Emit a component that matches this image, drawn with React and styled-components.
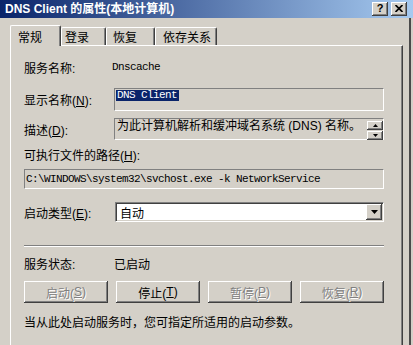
import React from 'react';
import styled, { createGlobalStyle } from 'styled-components';

const GlobalStyle = createGlobalStyle`
  html, body { margin: 0; padding: 0; background: #d4d0c8; }
  body {
    width: 413px; height: 345px; overflow: hidden;
    font-family: "Liberation Sans", "Noto Sans CJK SC", sans-serif;
    font-size: 12px; color: #000;
  }
`;

const Window = styled.div`
  width: 413px; height: 345px;
  display: flex; flex-direction: column;
  background: #d4d0c8; overflow: hidden;
`;

const TitleBar = styled.div`
  height: 18px; flex: none;
  display: flex; align-items: center;
  padding: 0 6px 0 5px;
  background: linear-gradient(to right, #0a246a 0%, #a6caf0 100%);
`;

const TitleText = styled.div`
  flex: 1; color: #fff; font-weight: bold; font-size: 12px;
  white-space: nowrap; line-height: 18px;
`;

const CaptionButtons = styled.div`
  display: flex; gap: 3px;
`;

const raised = `
  box-shadow: inset -1px -1px #404040, inset 1px 1px #ffffff,
    inset -2px -2px #808080, inset 2px 2px #d4d0c8;
`;

const CaptionButton = styled.div`
  width: 16px; height: 14px; box-sizing: border-box;
  background: #d4d0c8; ${raised}
  display: flex; align-items: center; justify-content: center;
  font-weight: bold; font-size: 11px; line-height: 1; color: #000;
  padding-bottom: 1px;
`;

const Body = styled.div`
  flex: 1; width: 411px; box-sizing: border-box;
  border-right: 2px solid #4a4a4a;
  padding: 7px 0 0 10px;
  display: flex; flex-direction: column;
`;

const TabStrip = styled.div`
  display: flex; align-items: flex-end;
  height: 20px; flex: none;
  position: relative; z-index: 1;
`;

const Tab = styled.div`
  width: ${p => p.$w}px; height: ${p => (p.$active ? 21 : 18)}px;
  margin-bottom: ${p => (p.$active ? -1 : 0)}px;
  box-sizing: border-box; flex: none;
  background: #d4d0c8;
  border-top: 1px solid #fff; border-left: 1px solid #fff;
  border-right: 1px solid #404040;
  box-shadow: inset -1px 0 #808080;
  border-radius: 2px 2px 0 0;
  padding-left: ${p => p.$pad}px;
  display: flex; align-items: center;
  white-space: nowrap;
`;

const Panel = styled.div`
  width: 393px; flex: 1; box-sizing: border-box;
  border-top: 1px solid #fff; border-left: 1px solid #fff;
  border-right: 1px solid #404040;
  box-shadow: inset -1px 0 #808080;
  padding: 0 18px 0 13px;
  display: flex; flex-direction: column;
`;

const Row = styled.div`
  display: flex; align-items: center;
  height: ${p => p.$h}px; margin-top: ${p => p.$mt}px; flex: none;
  white-space: nowrap;
`;

const Label = styled.div`
  width: 90px; flex: none; white-space: nowrap;
`;

const Mono = styled.span`
  font-family: "Liberation Mono", "Noto Sans CJK SC", monospace;
  font-size: 11px; letter-spacing: -0.6px;
`;

const ReadOnlyField = styled.div`
  flex: 1; height: 100%; box-sizing: border-box;
  border: 1px solid; border-color: #808080 #ffffff #ffffff #808080;
  background: #d4d0c8;
  display: flex; align-items: ${p => p.$align || 'flex-start'};
  padding: ${p => p.$pad || '1px 1px 1px 1px'};
`;

const Selection = styled.span`
  background: #0a246a; color: #fff;
  font-family: "Liberation Mono", "Noto Sans CJK SC", monospace;
  font-size: 11px; letter-spacing: -0.6px;
  line-height: 11px; padding: 0 2px 0 1px;
`;

const DescText = styled.div`
  flex: 1; padding: 1px 0 0 2px; line-height: 13px; white-space: nowrap;
`;

const SpinColumn = styled.div`
  display: flex; flex-direction: column; gap: 1px; padding-top: 2px;
`;

const SpinButton = styled.div`
  width: 16px; height: 9px; box-sizing: border-box;
  background: #d4d0c8; ${raised}
  display: flex; align-items: center; justify-content: center;
`;

const Combo = styled.div`
  flex: 1; height: 100%; box-sizing: border-box; margin-left: 1px;
  background: #fff;
  border: 1px solid; border-color: #808080 #ffffff #ffffff #808080;
  box-shadow: inset 1px 1px #404040, inset -1px -1px #d4d0c8;
  padding: 1px;
  display: flex; align-items: center;
`;

const ComboText = styled.div`
  flex: 1; padding-left: 3px;
`;

const DropButton = styled.div`
  width: 16px; height: 16px; box-sizing: border-box;
  background: #d4d0c8; ${raised}
  display: flex; align-items: center; justify-content: center;
`;

const Separator = styled.div`
  flex: none; margin-top: ${p => p.$mt}px;
  border-top: 1px solid #808080; border-bottom: 1px solid #ffffff;
`;

const ButtonRow = styled.div`
  display: grid; grid-template-columns: repeat(4, 1fr); column-gap: 8px;
  height: 22px; margin-top: 10px; flex: none;
`;

const PushButton = styled.div`
  background: #d4d0c8; ${raised}
  display: flex; align-items: center; justify-content: center;
  color: ${p => (p.$disabled ? '#808080' : '#000')};
  text-shadow: ${p => (p.$disabled ? '1px 1px #ffffff' : 'none')};
  white-space: nowrap;
`;

const U = styled.span`
  text-decoration: underline;
`;

const UpArrow = () => (
  <svg width="5" height="3" viewBox="0 0 5 3"><path d="M2.5 0 L5 3 L0 3 Z" fill="#000" /></svg>
);
const DownArrow = ({ w = 5, h = 3 }) => (
  <svg width={w} height={h} viewBox={`0 0 ${w} ${h}`}><path d={`M0 0 L${w} 0 L${w / 2} ${h} Z`} fill="#000" /></svg>
);

export default function App() {
  return (
    <>
      <GlobalStyle />
      <Window>
        <TitleBar>
          <TitleText>DNS Client 的属性(本地计算机)</TitleText>
          <CaptionButtons>
            <CaptionButton>?</CaptionButton>
            <CaptionButton>
              <svg width="8" height="7" viewBox="0 0 8 7">
                <path d="M0.5 0 L7.5 7 M7.5 0 L0.5 7" stroke="#000" strokeWidth="1.7" />
              </svg>
            </CaptionButton>
          </CaptionButtons>
        </TitleBar>
        <Body>
          <TabStrip>
            <Tab $active $w={51} $pad={7}>常规</Tab>
            <Tab $w={45} $pad={3}>登录</Tab>
            <Tab $w={49} $pad={6}>恢复</Tab>
            <Tab $w={62} $pad={7}>依存关系</Tab>
          </TabStrip>
          <Panel>
            <Row $h={20} $mt={11}>
              <Label>服务名称:</Label>
              <Mono style={{ marginLeft: -2 }}>Dnscache</Mono>
            </Row>
            <Row $h={23} $mt={11}>
              <Label>显示名称(<U>N</U>):</Label>
              <ReadOnlyField>
                <Selection>DNS Client</Selection>
              </ReadOnlyField>
            </Row>
            <Row $h={22} $mt={7}>
              <Label>描述(<U>D</U>):</Label>
              <ReadOnlyField $pad="0">
                <DescText>为此计算机解析和缓冲域名系统 (DNS) 名称。</DescText>
                <SpinColumn>
                  <SpinButton><UpArrow /></SpinButton>
                  <SpinButton><DownArrow /></SpinButton>
                </SpinColumn>
              </ReadOnlyField>
            </Row>
            <Row $h={16} $mt={6}>
              <Label>可执行文件的路径(<U>H</U>):</Label>
            </Row>
            <Row $h={20} $mt={7}>
              <ReadOnlyField $align="center" $pad="0 2px 0 1px">
                <Mono>C:\WINDOWS\system32\svchost.exe -k NetworkService</Mono>
              </ReadOnlyField>
            </Row>
            <Row $h={20} $mt={13}>
              <Label>启动类型(<U>E</U>):</Label>
              <Combo>
                <ComboText>自动</ComboText>
                <DropButton><DownArrow w={7} h={4} /></DropButton>
              </Combo>
            </Row>
            <Separator $mt={23} />
            <Row $h={16} $mt={8}>
              <Label>服务状态:</Label>
              <span>已启动</span>
            </Row>
            <ButtonRow>
              <PushButton $disabled>启动(<U>S</U>)</PushButton>
              <PushButton>停止(<U>T</U>)</PushButton>
              <PushButton $disabled>暂停(<U>P</U>)</PushButton>
              <PushButton $disabled>恢复(<U>R</U>)</PushButton>
            </ButtonRow>
            <Row $h={16} $mt={10}>
              当从此处启动服务时，您可指定所适用的启动参数。
            </Row>
          </Panel>
        </Body>
      </Window>
    </>
  );
}
